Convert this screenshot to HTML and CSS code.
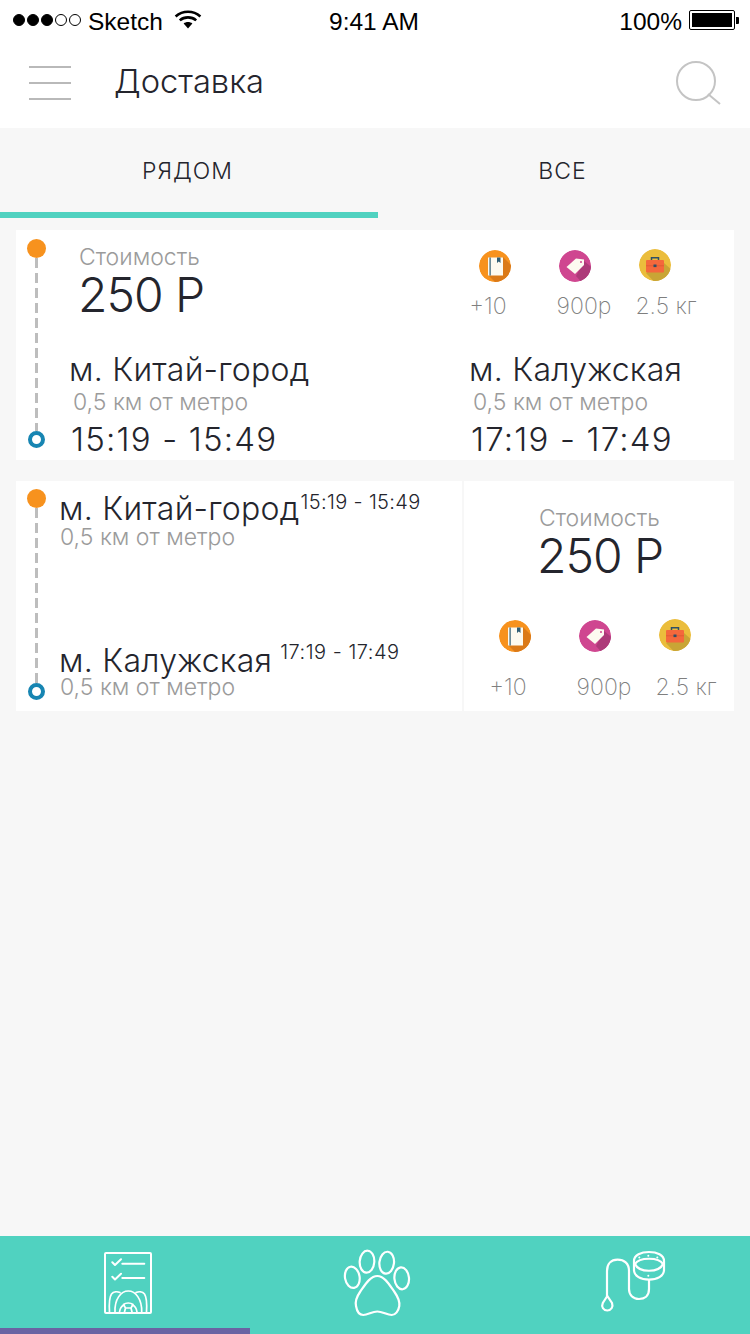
FILE: index.html
```html
<!DOCTYPE html>
<html lang="ru">
<head>
<meta charset="utf-8">
<title>Доставка</title>
<link rel="stylesheet" href="styles.css">
</head>
<body>
<svg class="defs" width="0" height="0" aria-hidden="true">
  <defs>
    <clipPath id="disc"><circle cx="16" cy="16" r="16"/></clipPath>
    <g id="ico-book" clip-path="url(#disc)">
      <circle cx="16" cy="16" r="16" fill="#f7921e"/>
      <path d="M9 25 L24 7 L34 17 V34 H18Z" fill="#db7a18"/>
      <rect x="9" y="7.500" width="15" height="18" fill="#fdfaf0"/>
      <rect x="10.500" y="7.500" width="1.200" height="18" fill="#2f5d74"/>
      <path d="M18 7.500h3.500v5.500l-1.750-1.500-1.750 1.500z" fill="#2f5d74"/>
    </g>
    <g id="ico-tag" clip-path="url(#disc)">
      <circle cx="16" cy="16" r="16" fill="#cf4690"/>
      <path d="M17 26 L25 11 L36 20 V36 H26Z" fill="#ad3a79"/>
      <path d="M7.500 17 L17 8.500 L25 9.500 L25 15 L16 24Z" fill="#fdfaf0"/>
      <circle cx="22" cy="12" r="1" fill="#cf4690"/>
    </g>
    <g id="ico-case" clip-path="url(#disc)">
      <circle cx="16" cy="16" r="16" fill="#ebbd3c"/>
      <path d="M7 24 L25 14 L36 24 V36 H18Z" fill="#c9a535"/>
      <path d="M12.500 11.500V8.800h7v2.700" fill="none" stroke="#2f4f66" stroke-width="1.500"/>
      <rect x="7" y="11" width="18" height="12.500" rx="1" fill="#f4683c"/>
      <rect x="7" y="16.500" width="18" height=".7" fill="#d9552e"/>
      <rect x="14.500" y="15.500" width="3" height="2.600" fill="#2f4f66"/>
    </g>
  </defs>
</svg>
<div class="page">
  <header class="status">
    <div class="status-left">
      <span class="signal"><i class="on"></i><i class="on"></i><i class="on"></i><i></i><i></i></span>
      <span class="carrier">Sketch</span>
      <svg class="wifi" width="28" height="20" viewBox="0 0 28 20"><path d="M14 18.500 L9.600 13.600 C12 11.600 16 11.600 18.400 13.600Z" fill="#000"/><path d="M5.800 10.400 C10.300 6.400 17.700 6.400 22.200 10.400" fill="none" stroke="#000" stroke-width="2.600"/><path d="M1.600 6.400 C8.800 .2 19.200 .2 26.400 6.400" fill="none" stroke="#000" stroke-width="2.600"/></svg>
    </div>
    <div class="status-time">9:41 AM</div>
    <div class="status-right">
      <span>100%</span>
      <span class="battery"><span class="battery-fill"></span></span>
      <span class="battery-tip"></span>
    </div>
  </header>

  <nav class="navbar">
    <div class="burger"><i></i><i></i><i></i></div>
    <h1 class="title">Доставка</h1>
    <svg class="search" width="46" height="46" viewBox="0 0 46 46"><circle cx="21" cy="20" r="19" fill="none" stroke="#c4c4c4" stroke-width="2"/><path d="M33 33 L45 43" fill="none" stroke="#c4c4c4" stroke-width="2"/></svg>
  </nav>

  <div class="tabs">
    <div class="tab tab-active">РЯДОМ</div>
    <div class="tab tab-all">ВСЕ</div>
  </div>

  <main class="list">
    <article class="card">
      <div class="route route-a"><span class="dot"></span><span class="dash"></span><span class="ring"></span></div>
      <div class="card-a-body">
        <div class="a-top">
          <div class="price price-a">
            <div class="price-label">Стоимость</div>
            <div class="price-value">250 Р</div>
          </div>
          <div class="goods goods-a">
            <div class="good"><svg class="good-ico" viewBox="0 0 32 32"><use href="#ico-book"/></svg><span class="good-text good-text-1">+10</span></div>
            <div class="good"><svg class="good-ico" viewBox="0 0 32 32"><use href="#ico-tag"/></svg><span class="good-text good-text-2">900р</span></div>
            <div class="good"><svg class="good-ico good-ico-up" viewBox="0 0 32 32"><use href="#ico-case"/></svg><span class="good-text good-text-3">2.5 кг</span></div>
          </div>
        </div>
        <div class="a-stops">
          <div class="stop">
            <div class="stop-name">м. Китай-город</div>
            <div class="stop-dist">0,5 км от метро</div>
            <div class="stop-time">15:19 - 15:49</div>
          </div>
          <div class="stop">
            <div class="stop-name">м. Калужская</div>
            <div class="stop-dist">0,5 км от метро</div>
            <div class="stop-time">17:19 - 17:49</div>
          </div>
        </div>
      </div>
    </article>

    <article class="card card-b">
      <div class="b-left">
        <div class="route route-b"><span class="dot"></span><span class="dash"></span><span class="ring"></span></div>
        <div class="b-stops">
          <div class="b-stop">
            <div class="b-line"><span class="stop-name">м. Китай-город</span><span class="b-time b-time-1">15:19 - 15:49</span></div>
            <div class="stop-dist b-dist">0,5 км от метро</div>
          </div>
          <div class="b-stop">
            <div class="b-line"><span class="stop-name">м. Калужская</span><span class="b-time b-time-2">17:19 - 17:49</span></div>
            <div class="stop-dist b-dist b-dist-2">0,5 км от метро</div>
          </div>
        </div>
      </div>
      <div class="b-right">
        <div class="price price-b">
          <div class="price-label">Стоимость</div>
          <div class="price-value">250 Р</div>
        </div>
        <div class="goods goods-b">
          <div class="good"><svg class="good-ico" viewBox="0 0 32 32"><use href="#ico-book"/></svg><span class="good-text good-text-1">+10</span></div>
          <div class="good"><svg class="good-ico" viewBox="0 0 32 32"><use href="#ico-tag"/></svg><span class="good-text good-text-2">900р</span></div>
          <div class="good"><svg class="good-ico good-ico-up" viewBox="0 0 32 32"><use href="#ico-case"/></svg><span class="good-text good-text-3">2.5 кг</span></div>
        </div>
      </div>
    </article>
  </main>

  <footer class="tabbar">
    <div class="tabbar-cell tabbar-active">
      <svg class="tb-doc" width="48" height="62" viewBox="0 0 48 62" fill="none" stroke="#fff" stroke-width="2" stroke-linecap="round" stroke-linejoin="round">
        <rect x="1" y="1" width="46" height="60" rx="1"/>
        <path d="M8.300 10.300 L11 13 L17 7.300M18.300 11.700H40.300M8.300 24.800 L11 27.500 L17 21.800M18.300 26H40.300"/>
        <path d="M11 60 C10.500 47 17 39 24.300 39 C31.500 39 38 47 37.700 60" stroke-width="1.700"/>
        <path d="M5.500 60 C5 52 5.500 45 7.500 42 C9.500 39.500 13.500 39.500 16 40.500M42.500 60 C43 52 42.500 45 40.500 42 C38.500 39.500 34.500 39.500 32 40.500" stroke-width="1.700"/>
        <path d="M15.500 60 C16 56.500 17.500 54 20 53M33 60 C32.500 56.500 31 54 28.500 53" stroke-width="1.700"/>
        <path d="M19.500 52.500 C22 50.500 26.500 50.500 29 52.500 L27 56 H21.500Z M21.500 56 L20.500 60M27 56 L28 60" stroke-width="1.700"/>
      </svg>
    </div>
    <div class="tabbar-cell">
      <svg class="tb-paw" width="70" height="70" viewBox="0 0 70 70" fill="none" stroke="#fff" stroke-width="2.200">
        <path d="M35.300 28 C28 28 23 37 18 44 C14.500 49 13 53 14 58 C15 64 18 67 21.300 67 C26 67 30 63.500 35.300 63.500 C40.500 63.500 45 67 49.700 67 C53.500 67 56.500 63 57.300 58 C58 53 56 49 52.500 44 C47.500 37 42.500 28 35.300 28Z"/>
        <ellipse cx="10.300" cy="29.300" rx="7.300" ry="10.700" transform="rotate(-10 10.300 29.300)"/>
        <ellipse cx="25" cy="13.700" rx="7.300" ry="11" transform="rotate(4 25 13.700)"/>
        <ellipse cx="44.700" cy="14.700" rx="7.300" ry="11" transform="rotate(6 44.700 14.700)"/>
        <ellipse cx="59.700" cy="30.300" rx="7.300" ry="11" transform="rotate(-5 59.700 30.300)"/>
      </svg>
    </div>
    <div class="tabbar-cell">
      <svg class="tb-leash" width="70" height="70" viewBox="0 0 70 70" fill="none" stroke="#fff" stroke-width="2.200">
        <path d="M34 13 C34 7 41 4 49 4 C57 4 64 7 64 13 V22 C64 28 57 31.700 49 31.700 C41 31.700 34 28 34 22Z"/>
        <path d="M35 16 C39 9 59 9 63 16 C59 25 39 25 35 16Z"/>
        <path d="M49 31.700V41 C49 48 44.500 51 39 51 C33 51 29 47 29 41V23 C29 15 24 11.700 17.500 11.700 C11 11.700 7 16 7 23V48"/>
        <path d="M7.300 48 L2.800 55 C1 59 3.500 62.500 7.300 62.500 C11 62.500 13.500 59 12 55Z"/>
        <g fill="#fff" stroke="none"><circle cx="39.300" cy="9.500" r="1"/><circle cx="48.300" cy="7.700" r="1"/><circle cx="57.300" cy="9.500" r="1"/><circle cx="48.300" cy="27.700" r="1"/></g>
      </svg>
    </div>
  </footer>
</div>
</body>
</html>
```
FILE: styles.css
```css
* { box-sizing: border-box; }
html, body { margin: 0; padding: 0; }
body { background: #f7f7f7; font-family: "Inter", "Liberation Sans", sans-serif; color: #24252d; }
.defs { display: block; height: 0; }
.page { width: 750px; height: 1334px; display: flex; flex-direction: column; overflow: hidden; }

/* status bar */
.status { height: 40px; background: #fff; display: grid; grid-template-columns: 1fr auto 1fr; align-items: center; padding: 3px 11px 0 13px; font-family: "Liberation Sans", sans-serif; font-size: 24.500px; color: #000; }
.status-left { display: flex; align-items: center; }
.signal { display: flex; gap: 2px; margin-top: -4px; }
.signal i { width: 12px; height: 12px; border-radius: 50%; border: 1px solid #000; display: block; }
.signal i.on { background: #000; }
.carrier { margin-left: 7px; }
.wifi { margin-left: 11px; margin-top: -4px; }
.status-time { margin-right: 4px; }
.status-right { display: flex; align-items: center; justify-content: flex-end; }
.battery { width: 46px; height: 20px; border: 1.500px solid #000; border-radius: 2px; padding: 2px; margin-left: 7px; margin-top: -3px; display: block; }
.battery-fill { display: block; height: 100%; background: #000; }
.battery-tip { width: 3px; height: 7px; background: #000; margin-left: 1px; margin-top: -3px; border-radius: 0 1px 1px 0; }

/* nav bar */
.navbar { height: 88px; background: #fff; display: flex; align-items: center; padding: 0 29px 2px; }
.burger { width: 42px; display: flex; flex-direction: column; gap: 14px; }
.burger i { display: block; height: 2px; background: #b9b9b9; }
.title { margin: 0 0 4px 43px; font-size: 32.700px; font-weight: 300; flex: 1; }
.search { margin-top: 2px; }

/* segmented tabs */
.tabs { height: 90px; display: grid; grid-template-columns: 378px 1fr; }
.tab { display: flex; align-items: center; justify-content: center; font-size: 23px; font-weight: 300; letter-spacing: 1px; padding-top: 2px; border-bottom: 6px solid transparent; }
.tab-active { border-bottom-color: #50d2c0; padding-right: 3px; }
.tab-all { padding-right: 3px; }

/* cards */
.list { flex: 1; padding: 12px 16px 0; display: flex; flex-direction: column; gap: 21px; }
.card { height: 230px; background: #fff; display: flex; }
.route { width: 19px; margin-left: 11px; display: flex; flex-direction: column; align-items: center; flex: none; }
.route-a { padding: 9px 0 12px; }
.route-b { padding: 8px 0 11px; }
.dot { width: 19px; height: 19px; border-radius: 50%; background: #f7921e; flex: none; }
.dash { flex: 1; width: 3px; background: repeating-linear-gradient(to bottom, #bdbdbd 0 10px, transparent 10px 15px); }
.ring { width: 17px; height: 17px; border-radius: 50%; border: 4px solid #1785b2; flex: none; }

.card-a-body { flex: 1; display: flex; flex-direction: column; }
.a-top { display: flex; height: 121px; flex: none; }
.price-label { font-size: 23px; font-weight: 300; color: #9b9b9b; line-height: 28px; }
.price-value { font-size: 48px; font-weight: 300; line-height: 48px; letter-spacing: -1px; margin-left: -2px; }
.price-a { padding: 13px 0 0 33px; width: 433px; }
.price-a .price-value { margin-left: -1px; }
.goods { display: grid; grid-template-columns: repeat(3, 80px); }
.goods-a { padding-top: 20px; }
.good { display: flex; flex-direction: column; align-items: center; width: 32px; }
.good-ico { width: 32px; height: 32px; display: block; flex: none; }
.good-ico-up { margin-top: -1px; margin-bottom: 1px; }
.good-text { margin-top: 10px; font-size: 23px; font-weight: 200; color: #7f7f7f; line-height: 28px; white-space: nowrap; }
.good-text-1 { margin-right: 14px; }
.good-text-2 { margin-left: 18px; }
.good-text-3 { margin-left: 22px; }

.a-stops { display: grid; grid-template-columns: 400px 1fr; padding-left: 23px; }
.stop-name { font-size: 32px; font-weight: 300; letter-spacing: .25px; line-height: 38px; white-space: nowrap; }
.stop-dist { font-size: 23px; font-weight: 300; color: #9b9b9b; line-height: 26px; padding-left: 4px; white-space: nowrap; }
.stop-time { font-size: 33px; font-weight: 300; letter-spacing: 1.200px; line-height: 42px; margin: 3px 0 0 2px; white-space: nowrap; }

.b-left { width: 448px; border-right: 2px solid #f7f7f7; display: flex; flex: none; }
.b-stops { flex: 1; padding: 9px 0 0 13px; display: flex; flex-direction: column; gap: 93px; }
.b-line { display: flex; align-items: flex-start; }
.b-time { font-size: 20px; font-weight: 300; letter-spacing: .35px; line-height: 26px; white-space: nowrap; }
.b-time-1 { margin: -1px 0 0 1px; }
.b-time-2 { margin: -3px 0 0 8px; letter-spacing: .5px; }
.b-dist { padding-left: 1px; line-height: 24px; margin-top: -3px; }
.b-dist-2 { margin-top: -5px; }

.b-right { flex: 1; display: flex; flex-direction: column; align-items: stretch; }
.price-b { padding: 23px 0 0 75px; height: 139px; flex: none; }
.goods-b { padding-left: 35px; }
.goods-b .good-text { margin-top: 21px; }

/* bottom bar */
.tabbar { height: 98px; background: #50d2c0; display: grid; grid-template-columns: repeat(3, 250px); flex: none; }
.tabbar-cell { height: 98px; display: flex; justify-content: center; padding-top: 12px; border-bottom: 6px solid transparent; }
.tabbar-active { border-bottom-color: #6a63a3; padding-top: 16px; padding-left: 6px; }
.tb-leash { margin-left: 20px; }
.tb-paw { margin-left: 4px; }
```
